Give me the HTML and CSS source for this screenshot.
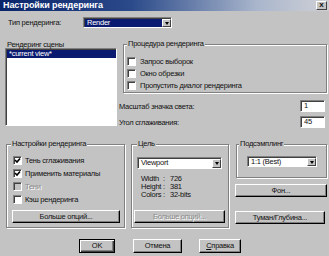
FILE: index.html
```html
<!DOCTYPE html>
<html lang="ru">

<head>
  <meta charset="UTF-8" />
  <title>Настройки рендеринга</title>
  <link rel="stylesheet" href="styles.css">
</head>

<body>

  <div class="window">
    <div class="titlebar">
      <span class="title">Настройки рендеринга</span>
      <span class="close">x</span>
    </div>

    <div class="type-row">
      <span class="type-label">Тип рендеринга:</span>
      <div class="combo combo-render">
        <span class="combo-value">Render</span>
        <span class="combo-arrow"></span>
      </div>
    </div>

    <div class="middle">
      <div class="scene">
        <div class="scene-label">Рендеринг сцены</div>
        <div class="listbox">
          <div class="list-item selected">*current view*</div>
        </div>
      </div>

      <div class="settings">
        <div class="group proc">
          <div class="group-title">Процедура рендеринга</div>
          <div class="rows">
            <div class="check-row"><span class="checkbox"></span>Запрос выборок</div>
            <div class="check-row"><span class="checkbox"></span>Окно обрезки</div>
            <div class="check-row"><span class="checkbox"></span>Пропустить диалог рендеринга</div>
          </div>
        </div>
        <div class="field-row first">
          <span>Масштаб значка света:</span>
          <span class="input">1</span>
        </div>
        <div class="field-row">
          <span>Угол сглаживания:</span>
          <span class="input">45</span>
        </div>
      </div>
    </div>

    <div class="lower">
      <div class="group render-settings">
        <div class="group-title">Настройки рендеринга</div>
        <div class="rows">
          <div class="check-row"><span class="checkbox checked"><svg viewBox="0 0 7 7"><path d="M1 3 L3 5 L6 1.5" /></svg></span>Тень сглаживания</div>
          <div class="check-row"><span class="checkbox checked"><svg viewBox="0 0 7 7"><path d="M1 3 L3 5 L6 1.5" /></svg></span>Применить материалы</div>
          <div class="check-row disabled"><span class="checkbox"></span>Тени</div>
          <div class="check-row"><span class="checkbox"></span>Кэш рендеринга</div>
        </div>
        <div class="button more">Больше опций...</div>
      </div>

      <div class="group target">
        <div class="group-title">Цель</div>
        <div class="combo combo-viewport">
          <span class="combo-value">Viewport</span>
          <span class="combo-arrow"></span>
        </div>
        <div class="info">
          <span>Width</span><span>:</span><span>726</span>
          <span>Height</span><span>:</span><span>381</span>
          <span>Colors</span><span>:</span><span>32-bits</span>
        </div>
        <div class="button more-disabled disabled">Больше опций...</div>
      </div>

      <div class="right-col">
        <div class="group sampling">
          <div class="group-title">Подсэмплинг</div>
          <div class="combo combo-sampling">
            <span class="combo-value">1:1 (Best)</span>
            <span class="combo-arrow"></span>
          </div>
        </div>
        <div class="button bg-btn">Фон...</div>
        <div class="button fog-btn">Туман/Глубина...</div>
      </div>
    </div>

    <div class="footer">
      <div class="button default ok">OK</div>
      <div class="button cancel">Отмена</div>
      <div class="button help"><u>С</u>правка</div>
    </div>
  </div>

</body>

</html>
```

FILE: styles.css
```css
/* Old-school windows dialog, scaled down */
* {
  box-sizing: border-box;
}

body {
  margin: 0;
  font-family: 'Liberation Sans', Arial, sans-serif;
  font-size: 7.5px;
  letter-spacing: -0.25px;
  color: #111;
  background: #c3c3c3;
}

.window {
  width: 329px;
  height: 256px;
  background: #c3c3c3;
  overflow: hidden;
}

.titlebar {
  height: 11px;
  display: flex;
  align-items: center;
  justify-content: space-between;
  padding: 0 2px 0 3px;
  background: linear-gradient(to right, #0a246a 0%, #2b4a8a 40%, #a9b6cc 78%, #cfd0d6 100%);
}

.title {
  color: #fff;
  font-weight: bold;
  font-size: 9px;
  letter-spacing: -0.1px;
  line-height: 11px;
}

.close {
  width: 11px;
  height: 9px;
  background: #c3c3c3;
  border: 1px solid;
  border-color: #fff #404040 #404040 #fff;
  font-size: 8px;
  font-weight: bold;
  line-height: 6px;
  text-align: center;
  letter-spacing: 0;
}

/* shared widgets */
.combo,
.listbox,
.input,
.checkbox {
  background: #fff;
  border: 1px solid;
  border-color: #808080 #fff #fff #808080;
  box-shadow: inset 1px 1px #404040;
}

.combo {
  display: flex;
  padding: 1px 0 0 1px;
}

.combo-value {
  flex: 1;
  line-height: 8px;
  padding-left: 2px;
  white-space: nowrap;
}

.combo-arrow {
  width: 9px;
  background: #c3c3c3;
  border: 1px solid;
  border-color: #fff #404040 #404040 #fff;
  display: flex;
  align-items: center;
  justify-content: center;
}

.combo-arrow::after {
  content: "";
  border-left: 2.5px solid transparent;
  border-right: 2.5px solid transparent;
  border-top: 3px solid #000;
}

.button {
  background: #c3c3c3;
  border: 1px solid;
  border-color: #fff #000 #000 #fff;
  box-shadow: inset -1px -1px #808080;
  text-align: center;
  line-height: 11px;
  white-space: nowrap;
}

.button.default {
  border: 1px solid #000;
  box-shadow: inset 1px 1px #fff, inset -1px -1px #404040, inset -2px -2px #808080;
}

.disabled {
  color: #8a8a8a;
  text-shadow: 1px 1px #fff;
}

.group {
  border: 1px solid #808080;
  box-shadow: inset 1px 1px #fff, 1px 1px #fff;
}

.group-title {
  display: table;
  margin-top: -5px;
  padding: 0 1px;
  background: #c3c3c3;
  line-height: 8px;
  white-space: nowrap;
}

.check-row {
  display: flex;
  align-items: center;
  gap: 4px;
  white-space: nowrap;
}

.checkbox {
  width: 9px;
  height: 9px;
  flex: none;
  display: flex;
}

.checkbox svg {
  width: 7px;
  height: 7px;
  fill: none;
  stroke: #000;
  stroke-width: 1.6;
}

.check-row.disabled .checkbox {
  background: #c3c3c3;
}

/* top row */
.type-row {
  height: 30px;
  display: flex;
  align-items: flex-start;
  padding: 6px 0 0 8px;
}

.type-label {
  width: 75px;
  line-height: 11px;
}

.combo-render {
  width: 89px;
  height: 11px;
}

.combo-render .combo-value {
  background: #0a1a70;
  color: #fff;
}

/* scene list + render procedure */
.middle {
  height: 87px;
  display: flex;
  padding-left: 5px;
}

.scene {
  width: 112px;
}

.scene-label {
  height: 7px;
  line-height: 7px;
  padding-left: 2px;
}

.listbox {
  height: 78px;
  padding: 1px 0 0 1px;
}

.list-item.selected {
  background: #0a1a70;
  color: #fff;
  line-height: 8px;
  padding-left: 2px;
}

.settings {
  width: 208px;
  margin-left: 2px;
  padding-top: 3px;
}

.proc {
  margin-left: 4px;
  height: 49px;
  padding-left: 3px;
}

.proc .rows {
  margin-top: 7px;
}

.proc .check-row {
  height: 12px;
}

.field-row {
  display: flex;
  justify-content: space-between;
  align-items: center;
  height: 12px;
  margin-top: 4px;
  padding-right: 2px;
}

.field-row.first {
  margin-top: 7px;
}

.input {
  width: 25px;
  height: 12px;
  line-height: 10px;
  padding-left: 3px;
}

/* lower groups */
.lower {
  height: 100px;
  display: flex;
  padding: 16px 0 0 6px;
}

.render-settings {
  width: 119px;
  height: 84px;
  padding: 0 4px 0 5px;
}

.render-settings .group-title {
  margin-left: -1px;
}

.render-settings .rows {
  margin-top: 6px;
}

.render-settings .check-row {
  height: 13px;
  padding-left: 1px;
  gap: 3px;
}

.more {
  width: 108px;
  height: 13px;
  margin-top: 4px;
}

.target {
  width: 98px;
  height: 84px;
  margin-left: 6px;
  padding: 0 2px;
}

.target .group-title {
  margin-left: 3px;
}

.combo-viewport {
  width: 85px;
  height: 12px;
  margin: 9px 0 0 3px;
}

.info {
  display: grid;
  grid-template-columns: 22px 7px auto;
  line-height: 8px;
  margin: 6px 0 0 7px;
}

.more-disabled {
  width: 91px;
  height: 13px;
  margin-top: 11px;
}

.right-col {
  width: 92px;
  margin-left: 6px;
}

.sampling {
  width: 91px;
  height: 34px;
  margin-left: 1px;
}

.sampling .group-title {
  margin-left: 2px;
}

.combo-sampling {
  width: 70px;
  height: 11px;
  margin: 8px 0 0 10px;
}

.bg-btn {
  width: 92px;
  height: 13px;
  margin-top: 6px;
}

.fog-btn {
  width: 90px;
  height: 13px;
  margin-top: 14px;
}

/* dialog buttons */
.footer {
  height: 28px;
  display: flex;
  padding: 11px 0 0 79px;
}

.footer .button {
  height: 14px;
  line-height: 12px;
}

.ok {
  width: 36px;
}

.cancel {
  width: 49px;
  margin-left: 18px;
}

.help {
  width: 42px;
  margin-left: 17px;
}
```
